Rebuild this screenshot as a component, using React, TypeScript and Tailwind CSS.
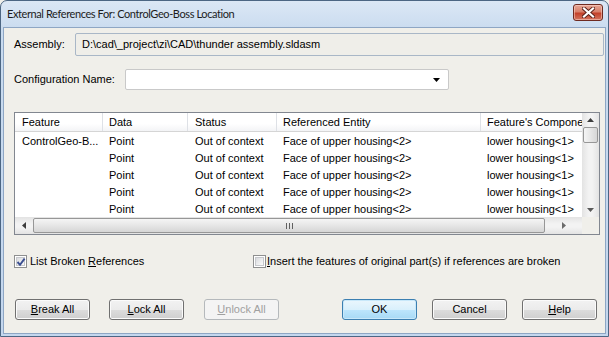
import React from "react";

const rows = [
	{ feature: "ControlGeo-B...", data: "Point", status: "Out of context", entity: "Face of upper housing<2>", comp: "lower housing<1>" },
	{ feature: "", data: "Point", status: "Out of context", entity: "Face of upper housing<2>", comp: "lower housing<1>" },
	{ feature: "", data: "Point", status: "Out of context", entity: "Face of upper housing<2>", comp: "lower housing<1>" },
	{ feature: "", data: "Point", status: "Out of context", entity: "Face of upper housing<2>", comp: "lower housing<1>" },
	{ feature: "", data: "Point", status: "Out of context", entity: "Face of upper housing<2>", comp: "lower housing<1>" },
];

function CloseButton() {
	return (
		<div className="w-[30px] h-[17px] mt-[3px] self-start rounded-[3px] border border-[#6e2a20] bg-[linear-gradient(#e6a696_0%,#d8806b_45%,#c4412a_55%,#d27560_100%)] shadow-[inset_0_0_0_1px_rgba(255,220,210,0.5)] flex items-center justify-center">
			<svg width="13" height="11" viewBox="0 0 13 11">
				<path d="M2 1.5 L11 9.5 M11 1.5 L2 9.5" stroke="#5a2018" strokeWidth="4" strokeLinecap="square" />
				<path d="M2 1.5 L11 9.5 M11 1.5 L2 9.5" stroke="#ffffff" strokeWidth="2.2" strokeLinecap="square" />
			</svg>
		</div>
	);
}

function CheckBox({ checked }: { checked?: boolean }) {
	return (
		<span className="relative w-[13px] h-[13px] border border-[#8e8f8f] bg-white p-[1px] flex shrink-0">
			<span className="flex-1 border border-[#c6c8cc] bg-[linear-gradient(135deg,#d9dbde,#fbfbfb)]" />
			{checked && (
				<svg className="absolute left-[1px] top-[1px]" width="10" height="10" viewBox="0 0 10 10">
					<path d="M1.5 5 L4 7.8 L8.6 1.6" fill="none" stroke="#3b4f91" strokeWidth="1.9" />
				</svg>
			)}
		</span>
	);
}

function Button({ children, primary, disabled }: { children: React.ReactNode; primary?: boolean; disabled?: boolean }) {
	let cls = "w-[75px] h-[21px] rounded-[3px] border flex items-center justify-center ";
	if (disabled) {
		cls += "border-[#b5b9bc] bg-[#f4f4f4] text-[#a0a0a0]";
	} else if (primary) {
		cls += "border-[#3c7fb1] bg-[linear-gradient(#eaf6fd_0%,#d9f0fc_50%,#bee6fd_50%,#a7d9f5_100%)] shadow-[inset_0_0_0_1px_#c8e8fa]";
	} else {
		cls += "border-[#707070] bg-[linear-gradient(#f2f2f2_0%,#ebebeb_50%,#dddddd_50%,#cfcfcf_100%)] shadow-[inset_0_0_0_1px_#fbfbfb]";
	}
	return <div className={cls}>{children}</div>;
}

function Arrow({ dir, color = "#3d3d3d" }: { dir: "up" | "down" | "left" | "right"; color?: string }) {
	const pts = {
		up: "0,4 7,4 3.5,0",
		down: "0,0 7,0 3.5,4",
		left: "4,0 4,7 0,3.5",
		right: "0,0 0,7 4,3.5",
	}[dir];
	const vertical = dir === "up" || dir === "down";
	return (
		<svg width={vertical ? 7 : 4} height={vertical ? 4 : 7} viewBox={vertical ? "0 0 7 4" : "0 0 4 7"}>
			<polygon points={pts} fill={color} />
		</svg>
	);
}

function Table() {
	const cols = [
		{ w: "w-[88px]", pl: "pl-[7px]" },
		{ w: "w-[85px]", pl: "pl-[6px]" },
		{ w: "w-[89px]", pl: "pl-[7px]" },
		{ w: "w-[204px]", pl: "pl-[6px]" },
		{ w: "w-[130px]", pl: "pl-[6px]" },
	];
	const header = ["Feature", "Data", "Status", "Referenced Entity", "Feature's Component"];
	return (
		<div className="ml-[10px] mt-[22px] w-[586px] h-[123px] border border-[#828790] bg-white flex flex-col">
			<div className="flex h-[104px]">
				<div className="flex-1 overflow-hidden flex flex-col">
					<div className="flex h-[19px] border-b border-[#d5d5d5] bg-[linear-gradient(#ffffff_0%,#ffffff_60%,#f3f4f6_100%)] shrink-0">
						{header.map((h, i) => (
							<div key={h} className={`${cols[i].w} ${cols[i].pl} shrink-0 flex items-center border-r border-[#dee1e6] whitespace-nowrap overflow-hidden`}>
								{h}
							</div>
						))}
					</div>
					{rows.map((r, ri) => (
						<div key={ri} className="flex h-[17px] shrink-0 pt-[1px]">
							{[r.feature, r.data, r.status, r.entity, r.comp].map((c, i) => (
								<div key={i} className={`${cols[i].w} ${cols[i].pl} shrink-0 flex items-center whitespace-nowrap overflow-hidden`}>
									{c}
								</div>
							))}
						</div>
					))}
				</div>
				{/* vertical scrollbar */}
				<div className="w-[17px] bg-[linear-gradient(90deg,#e3e3e3,#f3f3f3_40%,#f3f3f3_60%,#e3e3e3)] flex flex-col items-center">
					<div className="h-[14px] flex items-center justify-center">
						<Arrow dir="up" />
					</div>
					<div className="w-[15px] h-[16px] rounded-[2px] border border-[#979797] bg-[linear-gradient(90deg,#f5f5f5,#e6e6e6_50%,#d6d6d6)]" />
					<div className="flex-1" />
					<div className="h-[14px] flex items-center justify-center">
						<Arrow dir="down" color="#5a5a5a" />
					</div>
				</div>
			</div>
			<div className="flex h-[17px]">
				<div className="flex-1 bg-[linear-gradient(#e3e3e3,#f3f3f3_40%,#f3f3f3_60%,#e3e3e3)] flex items-center">
					<div className="w-[18px] flex items-center justify-center">
						<Arrow dir="left" />
					</div>
					<div className="w-[512px] h-[15px] rounded-[2px] border border-[#979797] bg-[linear-gradient(#f5f5f5,#e6e6e6_50%,#d6d6d6)] flex items-center justify-center gap-[2px]">
						<span className="w-[1px] h-[6px] bg-[#606060]" />
						<span className="w-[1px] h-[6px] bg-[#606060]" />
						<span className="w-[1px] h-[6px] bg-[#606060]" />
					</div>
					<div className="flex-1 flex items-center justify-center">
						<Arrow dir="right" color="#6b6b6b" />
					</div>
				</div>
				<div className="w-[17px] bg-[#f0efea]" />
			</div>
		</div>
	);
}

export default function App() {
	return (
		<div className="w-[609px] h-[337px] overflow-hidden bg-[#f0efea]">
			<div className="w-full h-full flex flex-col rounded-t-[7px] border border-[#4c6683] bg-[linear-gradient(#dbe7f5,#c9dbef_30px,#c4d7ee)] font-['Liberation_Sans',Arial,sans-serif] text-[11px] text-black">
				<div className="h-[26px] flex items-center pl-[6px] pr-[5px] shrink-0">
					<span className="flex-1 text-[11px] tracking-[-0.4px] font-['Lato',sans-serif] text-[#1c1c1c]">External References For: ControlGeo-Boss Location</span>
					<CloseButton />
				</div>
				<div className="flex-1 mx-[2px] mb-[2px] border border-[#8ea6c4] bg-[#f0efea] flex flex-col">
					<div className="flex items-center mt-[5px] pl-[10px] pr-[1px]">
						<span className="w-[61px] shrink-0">Assembly:</span>
						<div className="flex-1 h-[23px] rounded-[2px] border border-[#a9b7c7] bg-[#efeee9] flex items-center pl-[6px]">
							D:\cad\_project\zi\CAD\thunder assembly.sldasm
						</div>
					</div>
					<div className="flex items-center mt-[13px] pl-[10px]">
						<span className="w-[111px] shrink-0">Configuration Name:</span>
						<div className="w-[324px] h-[21px] rounded-[2px] border border-[#c9c9c9] bg-white flex items-center justify-end pr-[8px]">
							<Arrow dir="down" color="#000000" />
						</div>
					</div>
					<Table />
					<div className="flex items-center mt-[20px] h-[13px]">
						<div className="ml-[10px] w-[239px] flex items-center gap-[3px]">
							<CheckBox checked />
							<span>
								List Broken <span className="underline">R</span>eferences
							</span>
						</div>
						<div className="flex items-center gap-[1px]">
							<CheckBox />
							<span>
								<span className="underline">I</span>nsert the features of original part(s) if references are broken
							</span>
						</div>
					</div>
					<div className="flex items-center mt-[31px] pl-[11px]">
						<Button>
							<span className="underline">B</span>reak All
						</Button>
						<div className="w-[19px]" />
						<Button>
							<span className="underline">L</span>ock All
						</Button>
						<div className="w-[20px]" />
						<Button disabled>
							<span className="underline">U</span>nlock All
						</Button>
						<div className="w-[63px]" />
						<Button primary>OK</Button>
						<div className="w-[15px]" />
						<Button>Cancel</Button>
						<div className="w-[15px]" />
						<Button>
							<span className="underline">H</span>elp
						</Button>
					</div>
				</div>
			</div>
		</div>
	);
}
